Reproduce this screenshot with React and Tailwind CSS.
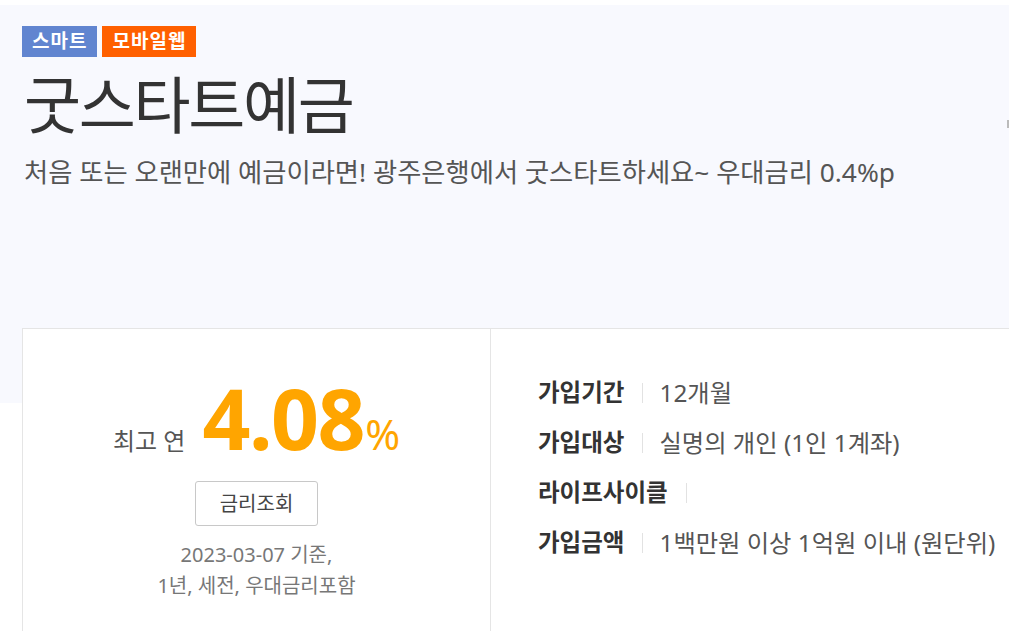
import React from 'react';

const font = { fontFamily: '"Noto Sans", "Noto Sans CJK KR", sans-serif' };

const infoRows = [
  { label: '가입기간', value: '12개월' },
  { label: '가입대상', value: '실명의 개인 (1인 1계좌)' },
  { label: '라이프사이클', value: '' },
  { label: '가입금액', value: '1백만원 이상 1억원 이내 (원단위)' },
];

const InfoRow = ({ label, value }) => (
  <li className="flex items-center h-[50px]">
    <span className="text-[23.5px] font-bold text-[#333]">{label}</span>
    <span className="ml-[18px] mr-[16px] h-[20px] w-px bg-[#e2e2e2]" />
    <span className="text-[24.3px] text-[#555]">{value}</span>
  </li>
);

export default function App() {
  return (
    <div className="min-h-screen bg-white overflow-hidden pt-[5px]" style={font}>
      {/* top visual */}
      <section className="relative bg-[#f8f9fe] h-[398px] pl-[22px] pt-[21px]">
        <div className="flex gap-[5px]">
          <span className="h-[31px] px-[10px] flex items-center bg-[#6185d0] text-white text-[19px] font-bold tracking-[1px]">스마트</span>
          <span className="h-[31px] px-[10px] flex items-center bg-[#ff6000] text-white text-[19px] font-bold tracking-[1px]">모바일웹</span>
        </div>
        <h1 className="mt-[13px] text-[62px] leading-[70px] text-[#333] tracking-[-2.3px] pl-[2px]">굿스타트예금</h1>
        <p className="mt-[17px] text-[26.3px] leading-[30px] text-[#555] pl-[2px]">
          처음 또는 오랜만에 예금이라면! 광주은행에서 굿스타트하세요~ 우대금리 0.4%p
        </p>
        <span className="absolute right-0 top-[115px] h-[8px] w-[2px] bg-[#bbb]" />
      </section>

      {/* rate card */}
      <div className="relative -mt-[75px] ml-[22px] w-[1100px] flex bg-white border border-[#e5e5e5] h-[330px]">
        <div className="w-[468px] shrink-0 border-r border-[#e5e5e5] flex flex-col items-center pt-[47px]">
          <div className="flex items-baseline text-[#ffa500]">
            <span className="text-[24px] text-[#555] mr-[17px]">최고 연</span>
            <span className="text-[84px] font-bold leading-[84px] tracking-[-1.5px]">4.08</span>
            <span className="text-[42px] ml-[1px]">%</span>
          </div>
          <button className="mt-[16px] w-[123px] h-[45px] border border-[#c8c8c8] rounded-[3px] text-[20px] text-[#444] bg-white">
            금리조회
          </button>
          <p className="mt-[13px] text-center text-[20px] leading-[31px] text-[#777]">
            2023-03-07 기준,
            <br />
            1년, 세전, 우대금리포함
          </p>
        </div>
        <ul className="pl-[47px] pt-[39px]">
          {infoRows.map(r => (
            <InfoRow key={r.label} {...r} />
          ))}
        </ul>
      </div>
    </div>
  );
}
